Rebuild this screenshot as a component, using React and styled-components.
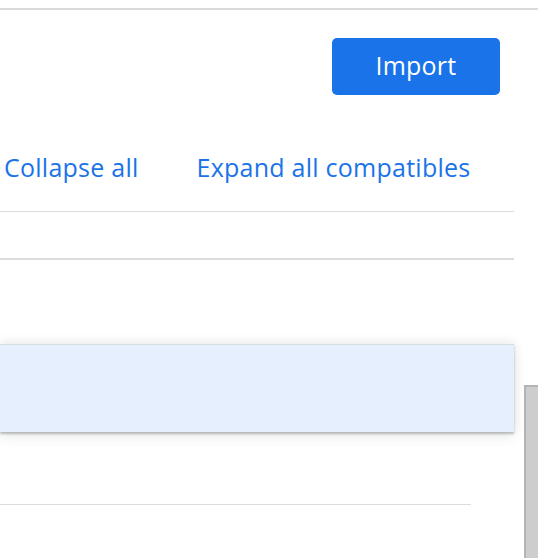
import React from "react";
import styled, { createGlobalStyle } from "styled-components";

const Global = createGlobalStyle`
  html, body { margin: 0; padding: 0; background: #fff; }
  body { font-family: "Open Sans", "Liberation Sans", sans-serif; overflow: hidden; }
`;

const Page = styled.div`
  width: 538px;
  height: 558px;
  overflow: hidden;
  padding-top: 8px;
  box-sizing: border-box;
`;

const TopRule = styled.div`
  height: 2px;
  background: #dadada;
`;

const Body = styled.div`
  display: grid;
  grid-template-columns: 514px 24px;
`;

const Main = styled.div`
  display: flex;
  flex-direction: column;
`;

const Header = styled.div`
  display: flex;
  justify-content: flex-end;
  padding: 28px 14px 0 0;
`;

const PrimaryButton = styled.button`
  width: 168px;
  height: 57px;
  border: none;
  border-radius: 5px;
  background: #1a73e8;
  color: #fff;
  font-family: "Open Sans", "Liberation Sans", sans-serif;
  font-size: 25px;
  letter-spacing: 0.2px;
  line-height: 32px;
  padding: 0 0 3px 0;
  box-sizing: border-box;
  cursor: pointer;
`;

const LinkRow = styled.div`
  display: flex;
  gap: 58px;
  padding: 56px 0 28px 4px;
  border-bottom: 1px solid #dadce0;
`;

const TextLink = styled.a`
  color: #1a73e8;
  font-size: 25px;
  letter-spacing: 0.25px;
  line-height: 32px;
  text-decoration: none;
  white-space: nowrap;
`;

const Row = styled.div`
  height: ${(p) => p.$h}px;
  margin-right: ${(p) => p.$inset || 0}px;
  border-bottom: ${(p) => (p.$rule ? `${p.$rule}px solid #dadce0` : "none")};
  box-sizing: border-box;
`;

const SelectedRow = styled.div`
  height: 88px;
  background: #e6effd;
  border-top: 1px solid #d7dbe2;
  box-sizing: border-box;
  box-shadow: 0 2px 2px rgba(60, 64, 67, 0.3), 0 4px 12px rgba(60, 64, 67, 0.12),
    0 -3px 10px rgba(60, 64, 67, 0.07);
  position: relative;
  z-index: 1;
`;

const Side = styled.div`
  padding: 375px 0 0 10px;
`;

const ScrollThumb = styled.div`
  height: 200px;
  background: #cdcdcd;
  border-left: 2px solid #b4b4b4;
  border-top: 2px solid #b4b4b4;
  box-sizing: border-box;
`;

export default function App() {
  return (
    <>
      <Global />
      <Page>
        <TopRule />
        <Body>
          <Main>
            <Header>
              <PrimaryButton>Import</PrimaryButton>
            </Header>
            <LinkRow>
              <TextLink href="#">Collapse all</TextLink>
              <TextLink href="#">Expand all compatibles</TextLink>
            </LinkRow>
            <Row $h={48} $rule={2} />
            <Row $h={84} />
            <SelectedRow />
            <Row $h={73} $inset={43} $rule={1} />
            <Row $h={60} />
          </Main>
          <Side>
            <ScrollThumb />
          </Side>
        </Body>
      </Page>
    </>
  );
}
